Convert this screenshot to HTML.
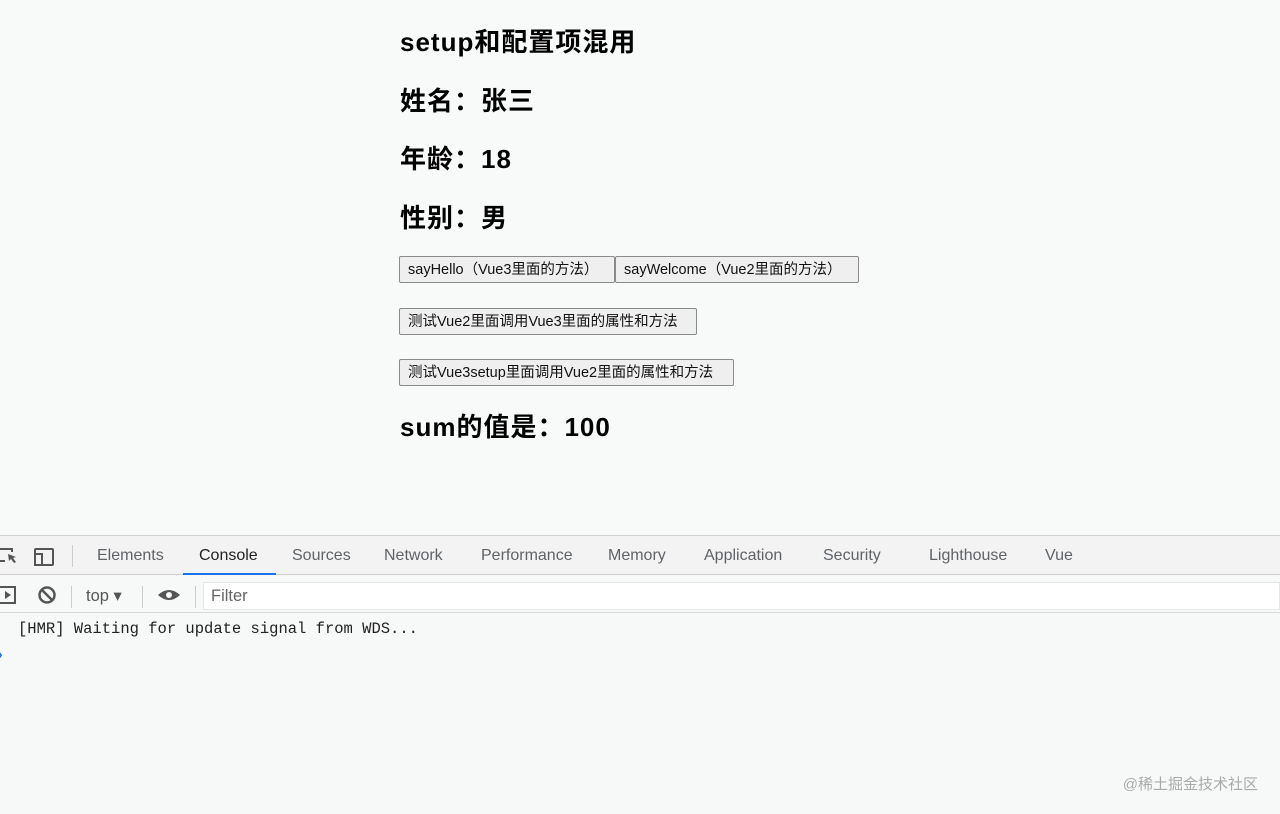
<!DOCTYPE html>
<html><head><meta charset="utf-8"><style>
*{margin:0;padding:0;box-sizing:border-box}
body{width:1280px;height:814px;background:#f8f9f9;position:relative;overflow:hidden;font-family:"Liberation Sans","Noto Sans CJK SC",sans-serif;color:#000}
.h{position:absolute;left:400px;font-size:26px;font-weight:bold;line-height:30px;letter-spacing:1px}
.b{position:absolute;height:27px;border:1px solid #8a8a8a;border-radius:2px;background:#efefef;font-size:14.5px;line-height:27px;padding:0 8px;color:#111;white-space:nowrap;overflow:hidden}
.dt{position:absolute;left:0;right:0;top:535px;bottom:0;background:#f7f8f8;border-top:1px solid #d0d0d0}
.tabs{position:absolute;top:0;left:0;right:0;height:39px;border-bottom:1px solid #d0d0d0;background:#f3f3f3}
.tab{position:absolute;top:11px;font-size:16px;color:#5f6368}
.bar{position:absolute;top:43px;left:0;right:0;height:34px;border-bottom:1px solid #d8d8d8}
.log{position:absolute;top:84px;left:18px;font-family:"Liberation Mono","DejaVu Sans Mono",monospace;font-size:15.5px;color:#222}
</style></head><body>
<div class="h" style="top:27px">setup和配置项混用</div>
<div class="h" style="top:86px">姓名：张三</div>
<div class="h" style="top:144px">年龄：18</div>
<div class="h" style="top:203px">性别：男</div>
<div class="b" style="left:399px;top:256px;width:216px">sayHello（Vue3里面的方法）</div>
<div class="b" style="left:615px;top:256px;width:244px">sayWelcome（Vue2里面的方法）</div>
<div class="b" style="left:399px;top:308px;width:298px">测试Vue2里面调用Vue3里面的属性和方法</div>
<div class="b" style="left:399px;top:359px;width:335px">测试Vue3setup里面调用Vue2里面的属性和方法</div>
<div class="h" style="top:412px">sum的值是：100</div>
<div class="dt">
 <div class="tabs">
  <svg style="position:absolute;left:0;top:10px" width="60" height="22"><path d="M0 3h12v3M0 15h5" stroke="#555" fill="none" stroke-width="2"/><path d="M8 8l8 3-3 1 3 4-2 1-3-4-2 2z" fill="#555"/><rect x="35" y="3" width="18" height="16" stroke="#555" fill="none" stroke-width="2" rx="1"/><rect x="35" y="8" width="7" height="11" stroke="#555" fill="#f3f3f3" stroke-width="2"/></svg>
  <div style="position:absolute;left:72px;top:9px;width:1px;height:22px;background:#ccc"></div>
  <span class="tab" style="left:97px">Elements</span>
  <span class="tab" style="left:199px;color:#222">Console</span>
  <div style="position:absolute;left:183px;top:37px;width:93px;height:2px;background:#1a73e8"></div>
  <span class="tab" style="left:292px">Sources</span>
  <span class="tab" style="left:384px">Network</span>
  <span class="tab" style="left:481px">Performance</span>
  <span class="tab" style="left:608px">Memory</span>
  <span class="tab" style="left:704px">Application</span>
  <span class="tab" style="left:823px">Security</span>
  <span class="tab" style="left:929px">Lighthouse</span>
  <span class="tab" style="left:1045px">Vue</span>
 </div>
 <div class="bar">
  <svg style="position:absolute;left:0;top:6px" width="200" height="22"><rect x="-2" y="2" width="17" height="16" stroke="#555" fill="none" stroke-width="2"/><path d="M5 6l6 4-6 4z" fill="#555"/><circle cx="47" cy="10" r="7.5" stroke="#555" fill="none" stroke-width="2.5"/><path d="M42 5l10 10" stroke="#555" stroke-width="2.5"/><path d="M158 10q11-10 22 0q-11 10-22 0z" fill="#555"/><circle cx="169" cy="10" r="3" fill="#f7f8f8"/></svg>
  <div style="position:absolute;left:71px;top:7px;width:1px;height:22px;background:#ccc"></div>
  <span style="position:absolute;left:86px;top:7px;font-size:16.5px;color:#555">top ▾</span>
  <div style="position:absolute;left:142px;top:7px;width:1px;height:22px;background:#ccc"></div>
  <div style="position:absolute;left:195px;top:7px;width:1px;height:22px;background:#ccc"></div>
  <div style="position:absolute;left:203px;top:3px;right:0;height:28px;background:#fff;border:1px solid #e6e6e6"></div>
  <span style="position:absolute;left:211px;top:8px;font-size:16.5px;color:#666">Filter</span>
 </div>
 <div class="log">[HMR] Waiting for update signal from WDS...</div>
 <div style="position:absolute;left:-2px;top:110px;color:#1a73e8;font-size:14px;font-weight:bold">›</div>
 <div style="position:absolute;right:22px;bottom:20px;font-size:15px;color:#aaa">@稀土掘金技术社区</div>
</div>
</body></html>
